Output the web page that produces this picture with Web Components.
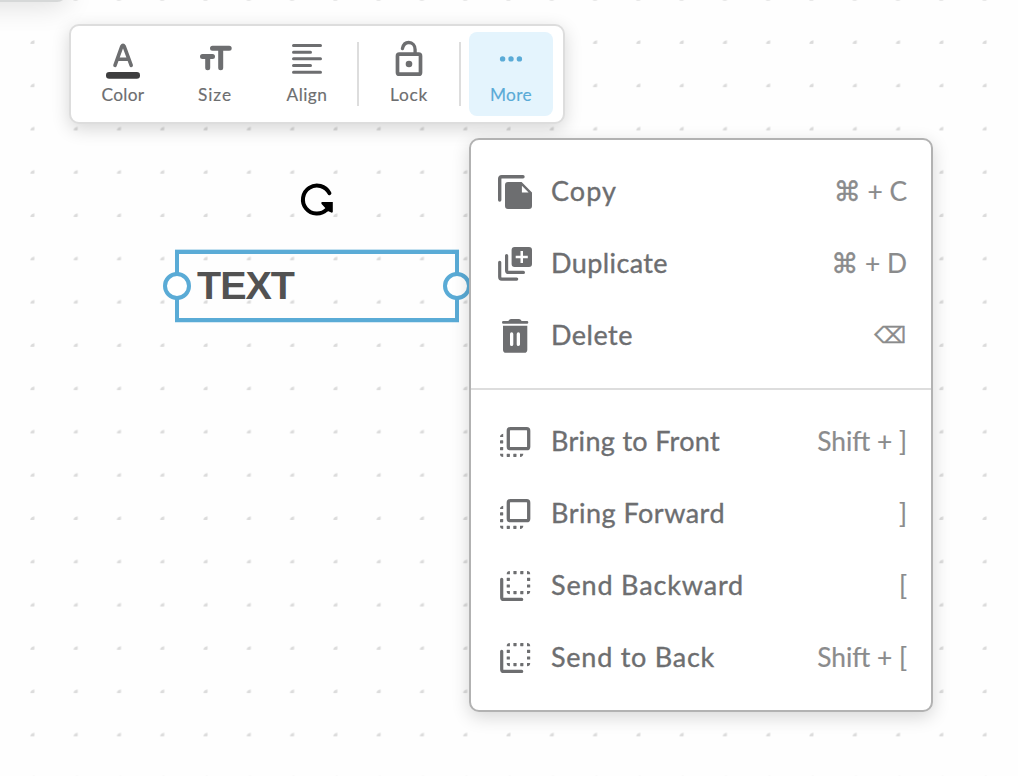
<!DOCTYPE html>
<html lang="en">
<head>
<meta charset="utf-8">
<title>Canvas editor</title>
<style>
html,body{margin:0;height:100%;overflow:hidden}
body{font-family:Lato,"Open Sans",sans-serif;color:#6d6e70;background:#fff}
</style>
</head>
<body>
<board-canvas>
  <corner-panel></corner-panel>
  <tool-bar>
    <tool-button icon="color" fit="43">Color</tool-button>
    <tool-button icon="size" fit="34">Size</tool-button>
    <tool-button icon="align" fit="41">Align</tool-button>
    <tool-divider></tool-divider>
    <tool-button icon="lock" fit="38">Lock</tool-button>
    <tool-divider></tool-divider>
    <tool-button icon="more" fit="42" active>More</tool-button>
  </tool-bar>
  <rotate-handle></rotate-handle>
  <text-selection>TEXT</text-selection>
  <context-menu>
    <menu-group>
      <menu-row icon="copy" fit="66">Copy<span slot="keys"><key-symbol>⌘</key-symbol> + C</span></menu-row>
      <menu-row icon="duplicate" fit="117">Duplicate<span slot="keys"><key-symbol>⌘</key-symbol> + D</span></menu-row>
      <menu-row icon="trash" fit="82">Delete<span slot="keys"><key-symbol small>⌫</key-symbol></span></menu-row>
    </menu-group>
    <menu-group>
      <menu-row icon="front" fit="169">Bring to Front<span slot="keys">Shift + ]</span></menu-row>
      <menu-row icon="front" fit="174">Bring Forward<span slot="keys">]</span></menu-row>
      <menu-row icon="back" fit="193">Send Backward<span slot="keys">[</span></menu-row>
      <menu-row icon="back" fit="164">Send to Back<span slot="keys">Shift + [</span></menu-row>
    </menu-group>
  </context-menu>
</board-canvas>
<script>
const line = (w, d, extra = '') => `<path d="${d}" fill="none" stroke="currentColor" stroke-width="${w}" stroke-linecap="round" stroke-linejoin="round" ${extra}/>`;
const cells = list => list.map(([x, y]) => `<rect x="${x}" y="${y}" width="3.2" height="3.2" rx=".4"/>`).join('');
const ICONS = {
  color: line(3.6, 'M10 24.4L16.8 5.4Q18 3.2 19.2 5.4L26.2 24.4M12.8 18.2H23.4') + '<rect x="1" y="31" width="34" height="6.8" rx="3.2" fill="#3e3e3f"/>',
  size: line(5, 'M15.5 7.2H32.2M23.7 7.5V26.8M5.5 15.5H15.5M10.7 15.5V26.8'),
  align: line(3, 'M4.5 4.5H31.5M4.5 11.2H21.5M4.5 17.8H31.5M4.5 24.5H21.5M4.5 31.2H31.5'),
  lock: '<rect x="6.5" y="13.2" width="23" height="20" rx="1.8" fill="none" stroke="currentColor" stroke-width="3.7"/><circle cx="18" cy="23" r="3.3"/>' + line(3.3, 'M11.4 7.6C12.2 3.9 14.6 1.5 17.7 1.5C21.6 1.5 24.1 4.5 24.1 8.4V12.5'),
  more: '<circle cx="9.6" cy="17.9" r="2.7"/><circle cx="18" cy="17.9" r="2.7"/><circle cx="26.4" cy="17.9" r="2.7"/>',
  copy: line(3.4, 'M2.7 26V4.7Q2.7 2.7 4.7 2.7H26') + '<path fill-rule="evenodd" d="M11 8H24.6L35 18.4V32Q35 35 32 35H11Q8 35 8 32V11Q8 8 11 8ZM24.9 11.7V18.4H31.6Z"/>',
  duplicate: '<path fill-rule="evenodd" d="M17.6 1H32Q35 1 35 4V18Q35 21 32 21H17.6Q14.6 21 14.6 18V4Q14.6 1 17.6 1ZM23.5 5V9.8H18.7V12.2H23.5V17H26V12.2H30.8V9.8H26V5Z"/>' + line(3.2, 'M9.6 9.6V24.4Q9.6 26.4 11.6 26.4H26.4M2.7 16.3V31Q2.7 33.1 4.7 33.1H19.7'),
  trash: '<path d="M6.3 3H11.3Q12.5 1 14 1H22Q23.5 1 24.7 3H30Q31.3 3 31.3 4.4T30 5.8H6.3Q5 5.8 5 4.4T6.3 3Z"/><path fill-rule="evenodd" d="M6 7.7H30.3V31.7Q30.3 34.8 27.3 34.8H9Q6 34.8 6 31.7ZM14.6 14.3Q13 14.3 13 16V26.4Q13 28 14.6 28T16.3 26.4V16Q16.3 14.3 14.6 14.3ZM21.4 14.3Q19.7 14.3 19.7 16V26.4Q19.7 28 21.4 28T23 26.4V16Q23 14.3 21.4 14.3Z"/>',
  front: '<rect x="11.3" y="4.7" width="20.4" height="20" rx="2" fill="none" stroke="currentColor" stroke-width="3.3"/><path d="M6.2 9.7V13H3Q3 10.4 6.2 9.7ZM3 29.7H6.2V33Q3 33 3 29.7ZM23 29.7H26.3Q26.3 32.6 23 33Z"/>' + cells([[3,16.3],[3,23],[9.7,29.7],[16.3,29.7]]),
  back: '<path d="M12.9 3V6.2H9.7Q9.7 3 12.9 3ZM30 3Q33.2 3 33.2 6.2H30ZM9.7 23H12.9V26.2Q9.7 26.2 9.7 23ZM30 23H33.2Q33.2 26.2 30 26.2Z"/>' + cells([[16.4,3],[23.2,3],[9.7,9.7],[30,9.7],[9.7,16.4],[30,16.4],[16.4,23],[23.2,23]]) + line(3.2, 'M4.7 11.3V29.4Q4.7 31.4 6.7 31.4H24.7')
};
const icon = name => `<svg class="icon" width="36" height="36" viewBox="0 0 36 36" fill="currentColor" aria-hidden="true">${ICONS[name]}</svg>`;

class Base extends HTMLElement {
  constructor() {
    super();
    this.attachShadow({mode: 'open'}).innerHTML = `<style>*{box-sizing:border-box}svg{display:block;overflow:visible;flex:none}${this.css()}</style>${this.html()}`;
  }
  css() { return ''; }
  html() { return '<slot></slot>'; }
  connectedCallback() {
    const label = this.shadowRoot.querySelector('.label');
    const want = parseFloat(this.getAttribute('fit'));
    if (!label || !want) return;
    const count = this.firstChild.textContent.trim().length;
    label.style.letterSpacing = (want - label.getBoundingClientRect().width) / count + 'px';
  }
}
const define = (tag, css, html) => customElements.define(tag, class extends Base {
  css() { return css; }
  html() { return typeof html === 'function' ? html(this) : html || '<slot></slot>'; }
});

define('board-canvas', `
  :host{display:block;position:relative;width:1018px;height:776px;overflow:hidden;background:#fefefe}
  .grid{position:absolute;inset:0}`,
  `<svg class="grid" width="1018" height="776" aria-hidden="true">
    <defs><pattern id="dots" x="30" y="-3.3" width="43.28" height="43.28" patternUnits="userSpaceOnUse"><path d="M.2 3.6Q.6 1 4.4.2L4.5 3.4Q3 4.4 .2 3.6Z" fill="#dcdcdc"/></pattern></defs>
    <rect width="1018" height="776" fill="url(#dots)"/></svg><slot></slot>`);
define('corner-panel', `
  :host{display:block;box-sizing:border-box;position:absolute;left:-40px;top:-38px;width:107px;height:40px;background:#fff;border:2px solid #d6d8d8;border-radius:10px;box-shadow:0 4px 28px rgba(0,0,0,.13)}`);
define('tool-bar', `
  :host{display:flex;box-sizing:border-box;position:absolute;left:69px;top:24px;width:496px;height:100px;padding:0 10px;gap:8px;align-items:center;background:#fff;border:2px solid #ddd;border-radius:10px;box-shadow:0 5px 18px rgba(0,0,0,.16)}`);
define('tool-divider', `:host{display:block;width:2px;height:64px;background:#ddd;flex:none}`);
define('tool-button', `
  :host{display:flex;box-sizing:border-box;flex:none;flex-direction:column;align-items:center;width:84px;height:84px;padding-top:9px;border-radius:8px;font-size:17.3px;line-height:22px}
  :host([active]){background:#e4f4fd;color:#5aabd7}
  .label{margin-top:7px;white-space:nowrap;-webkit-text-stroke:.15px currentColor}`,
  el => icon(el.getAttribute('icon')) + '<span class="label"><slot></slot></span>');
define('rotate-handle', `:host{display:block;position:absolute;left:299px;top:182px;color:#000}`,
  `<svg width="36" height="36" viewBox="0 0 36 36"><path d="M30.4 11.2A14 14 0 1 0 27.9 27.4" fill="none" stroke="currentColor" stroke-width="4" stroke-linecap="round"/><path d="M23 20H33.8V29.8Q33.4 30.9 32.3 30.6L29.4 29.2L26.5 29.5L27 26.8L22.6 22Q21.6 20.4 23 20Z" fill="currentColor"/></svg>`);
define('text-selection', `
  :host{display:flex;box-sizing:border-box;position:absolute;left:175px;top:250px;width:284px;height:72px;border:4px solid #5aabd6;box-shadow:0 -1px 0 rgba(90,171,214,.35),0 1px 0 rgba(90,171,214,.25);align-items:center;padding-left:18px;font:bold 39.5px/1 "Liberation Sans",Arial,sans-serif;color:#525252;letter-spacing:-1px}
  i{position:absolute;width:28px;height:28px;border:4px solid #5aabd6;border-radius:50%;background:#fff;top:18px}
  .l{left:-16px}.r{right:-16px}`,
  `<slot></slot><i class="l"></i><i class="r"></i>`);
define('context-menu', `
  :host{display:block;box-sizing:border-box;position:absolute;left:469px;top:138px;width:464px;height:574px;background:#fff;border:2px solid #b2b2b2;border-radius:10px;box-shadow:0 5px 18px rgba(0,0,0,.16)}
  ::slotted(menu-group:not(:first-child)){border-top:2px solid #ddd}`);
define('menu-group', `:host{display:block;padding:16px 0}`);
define('menu-row', `
  :host{display:flex;align-items:center;height:72px;padding:0 24px 0 26px;font-size:27px;line-height:36px;white-space:nowrap}
  .label{margin:0 0 2px 18px;-webkit-text-stroke:.35px currentColor}
  .keys{margin:0 0 2px auto;color:#8a8b8c;font-size:26.3px;-webkit-text-stroke:.2px currentColor}`,
  el => icon(el.getAttribute('icon')) + '<span class="label"><slot></slot></span><span class="keys"><slot name="keys"></slot></span>');
define('key-symbol', `
  :host{display:inline-block;font-family:"DejaVu Sans",sans-serif;font-size:27px;line-height:30px;-webkit-text-stroke:.4px currentColor}
  :host([small]){font-size:22.5px;margin-right:1px;vertical-align:2px}`);
</script>
</body>
</html>
